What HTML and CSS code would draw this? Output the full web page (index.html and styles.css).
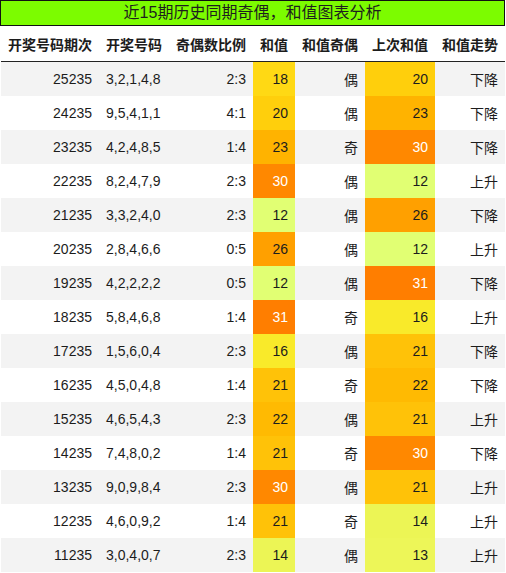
FILE: index.html
```html
<!DOCTYPE html>
<html lang="zh-CN">

<head>
    <meta charset="UTF-8">
    <meta name="viewport" content="width=device-width, initial-scale=1.0">
    <title>近15期历史同期奇偶，和值图表分析</title>
    <link rel="stylesheet" href="styles.css">
</head>

<body>
    <div class="panel">
        <div class="title">近15期历史同期奇偶，和值图表分析</div>
        <table class="stats">
            <thead>
                <tr>
                    <th>开奖号码期次</th>
                    <th>开奖号码</th>
                    <th>奇偶数比例</th>
                    <th>和值</th>
                    <th>和值奇偶</th>
                    <th>上次和值</th>
                    <th>和值走势</th>
                </tr>
            </thead>
            <tbody id="rows"></tbody>
        </table>
    </div>

    <script>
        // issue, numbers, ratio, sum, parity, last sum, trend
        const rows = [
            ['25235', '3,2,1,4,8', '2:3', 18, '偶', 20, '下降'],
            ['24235', '9,5,4,1,1', '4:1', 20, '偶', 23, '下降'],
            ['23235', '4,2,4,8,5', '1:4', 23, '奇', 30, '下降'],
            ['22235', '8,2,4,7,9', '2:3', 30, '偶', 12, '上升'],
            ['21235', '3,3,2,4,0', '2:3', 12, '偶', 26, '下降'],
            ['20235', '2,8,4,6,6', '0:5', 26, '偶', 12, '上升'],
            ['19235', '4,2,2,2,2', '0:5', 12, '偶', 31, '下降'],
            ['18235', '5,8,4,6,8', '1:4', 31, '奇', 16, '上升'],
            ['17235', '1,5,6,0,4', '2:3', 16, '偶', 21, '下降'],
            ['16235', '4,5,0,4,8', '1:4', 21, '奇', 22, '下降'],
            ['15235', '4,6,5,4,3', '2:3', 22, '偶', 21, '上升'],
            ['14235', '7,4,8,0,2', '1:4', 21, '奇', 30, '下降'],
            ['13235', '9,0,9,8,4', '2:3', 30, '偶', 21, '上升'],
            ['12235', '4,6,0,9,2', '1:4', 21, '奇', 14, '上升'],
            ['11235', '3,0,4,0,7', '2:3', 14, '偶', 13, '上升']
        ];

        // heat colours for the sum cells
        const heat = {
            12: '#e1ff73', 13: '#edf658', 14: '#ecf555', 16: '#f9ea2a',
            18: '#ffd914', 20: '#ffcf0c', 21: '#ffc208', 22: '#ffba02',
            23: '#ffb300', 26: '#ffa000', 30: '#ff8800', 31: '#ff7e00'
        };

        function sumCell(value) {
            const light = value >= 30 ? ' light' : '';
            return `<td class="num sum${light}" style="background:${heat[value]}">${value}</td>`;
        }

        document.getElementById('rows').innerHTML = rows.map(r => `
            <tr>
                <td class="num">${r[0]}</td>
                <td class="code">${r[1]}</td>
                <td class="num">${r[2]}</td>
                ${sumCell(r[3])}
                <td class="num">${r[4]}</td>
                ${sumCell(r[5])}
                <td class="num">${r[6]}</td>
            </tr>
        `).join('');
    </script>
</body>

</html>
```
FILE: styles.css
```css
body {
    margin: 0;
    background: #ffffff;
    font-family: "Liberation Sans", "Noto Sans CJK SC", sans-serif;
    color: #1c1c1c;
}

.panel {
    width: 506px;
}

.title {
    height: 24px;
    line-height: 24px;
    width: 503px;
    border: 1px solid #111;
    background: #7cfc00;
    text-align: center;
    font-size: 16px;
    color: #1e1e1e;
}

.stats {
    border-collapse: collapse;
    border-spacing: 0;
    margin-left: 1px;
    width: 504px;
    font-size: 14px;
}

.stats th {
    height: 35px;
    padding: 0 7px;
    font-weight: bold;
    text-align: center;
    white-space: nowrap;
    border-bottom: 1px solid #222;
}

.stats td {
    height: 34px;
    padding: 0 7px;
    white-space: nowrap;
}

.stats tbody tr:nth-child(odd) {
    background: #f3f3f3;
}

.stats tbody tr:nth-child(even) {
    background: #ffffff;
}

.num {
    text-align: right;
}

.code {
    text-align: left;
}

.sum.light {
    color: #ffffff;
}
```
